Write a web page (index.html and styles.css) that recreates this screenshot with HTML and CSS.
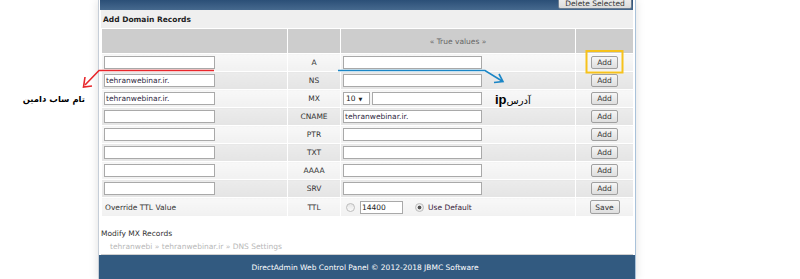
FILE: index.html
```html
<!DOCTYPE html>
<html>
  <head>
    <meta charset="UTF-8" />
    <link rel="stylesheet" href="styles.css">
  </head>
  <body>
    <div class="panel">
      <div class="topbar">
        <button class="btn-delete">Delete Selected</button>
      </div>
      <div class="content">
        <div class="section-title">Add Domain Records</div>
        <table class="records">
          <colgroup>
            <col style="width: 186px">
            <col style="width: 53px">
            <col style="width: 235px">
            <col style="width: 58px">
          </colgroup>
          <tr class="head">
            <td></td>
            <td></td>
            <td class="center">« True values »</td>
            <td></td>
          </tr>
          <tr class="odd">
            <td><input class="field" type="text"></td>
            <td class="center">A</td>
            <td><input class="field wide" type="text"></td>
            <td class="center"><button class="btn">Add</button></td>
          </tr>
          <tr class="even">
            <td><input class="field" type="text" value="tehranwebinar.ir."></td>
            <td class="center">NS</td>
            <td><input class="field wide" type="text"></td>
            <td class="center"><button class="btn">Add</button></td>
          </tr>
          <tr class="odd">
            <td><input class="field" type="text" value="tehranwebinar.ir."></td>
            <td class="center">MX</td>
            <td>
              <div class="mx-cell">
                <span class="fake-select">10 <span class="caret">▼</span></span>
                <input class="field mx" type="text">
              </div>
            </td>
            <td class="center"><button class="btn">Add</button></td>
          </tr>
          <tr class="even">
            <td><input class="field" type="text"></td>
            <td class="center">CNAME</td>
            <td><input class="field wide" type="text" value="tehranwebinar.ir."></td>
            <td class="center"><button class="btn">Add</button></td>
          </tr>
          <tr class="odd">
            <td><input class="field" type="text"></td>
            <td class="center">PTR</td>
            <td><input class="field wide" type="text"></td>
            <td class="center"><button class="btn">Add</button></td>
          </tr>
          <tr class="even">
            <td><input class="field" type="text"></td>
            <td class="center">TXT</td>
            <td><input class="field wide" type="text"></td>
            <td class="center"><button class="btn">Add</button></td>
          </tr>
          <tr class="odd">
            <td><input class="field" type="text"></td>
            <td class="center">AAAA</td>
            <td><input class="field wide" type="text"></td>
            <td class="center"><button class="btn">Add</button></td>
          </tr>
          <tr class="even">
            <td><input class="field" type="text"></td>
            <td class="center">SRV</td>
            <td><input class="field wide" type="text"></td>
            <td class="center"><button class="btn">Add</button></td>
          </tr>
          <tr class="odd ttl">
            <td class="label">Override TTL Value</td>
            <td class="center">TTL</td>
            <td>
              <div class="ttl-cell">
                <span class="radio"></span>
                <input class="field ttl-input" type="text" value="14400">
                <span class="radio checked"></span>
                <span class="use-default">Use Default</span>
              </div>
            </td>
            <td class="center"><button class="btn btn-save">Save</button></td>
          </tr>
        </table>
        <div class="links">
          <div class="modify">Modify MX Records</div>
          <div class="crumbs">tehranwebi » tehranwebinar.ir » DNS Settings</div>
        </div>
      </div>
      <div class="footer">DirectAdmin Web Control Panel © 2012-2018 JBMC Software</div>
    </div>

    <!-- annotations drawn over the screenshot -->
    <svg class="marks" width="800" height="279" viewBox="0 0 800 279">
      <path d="M214 70.5 H99 L85 85" fill="none" stroke="#e8262b" stroke-width="1.6"/>
      <path d="M85 77 L83.5 87 L92 86" fill="none" stroke="#e8262b" stroke-width="1.6"/>
      <path d="M338 70.5 H485 L502 81" fill="none" stroke="#1b86c6" stroke-width="1.6"/>
      <path d="M494 82.5 L503 81.5 L499 74" fill="none" stroke="#1b86c6" stroke-width="1.6"/>
      <rect x="586.5" y="51" width="36" height="21.5" fill="none" stroke="#f6c21c" stroke-width="2"/>
    </svg>
    <div class="note note-sub" dir="rtl">تام ساب دامین</div>
    <div class="note note-ip" dir="rtl"><span class="fa">آدرس</span><b>ip</b></div>
  </body>
</html>
```

FILE: styles.css
```css
* {
  margin: 0;
  padding: 0;
  box-sizing: border-box;
}
body {
  width: 800px;
  height: 279px;
  overflow: hidden;
  position: relative;
  background: #fff;
  font-family: "DejaVu Sans", Verdana, sans-serif;
  font-size: 7.5px;
  color: #333;
}
.panel {
  margin-left: 98px;
  width: 538px;
  background: #fff;
  border-left: 1px solid #c6ced8;
  border-right: 1px solid #a9c2da;
  box-shadow: 0 0 9px rgba(0, 0, 0, 0.13);
}
.topbar {
  height: 10px;
  margin: 0 2px 0 1px;
  background: linear-gradient(#2b4f77, #46698e);
  display: flex;
  justify-content: flex-end;
  align-items: flex-end;
  overflow: hidden;
  padding: 0 1px 1px 0;
}
.btn-delete {
  height: 15px;
  width: 74px;
  font-family: "DejaVu Sans", Verdana, sans-serif;
  font-size: 7.5px;
  color: #333;
  background: linear-gradient(#f4f4f4, #dcdcdc);
  border: 1px solid #6d7f93;
  border-radius: 2px;
  padding-top: 4px;
}
.content {
  padding: 0 2px;
}
.section-title {
  height: 18px;
  line-height: 19px;
  padding-left: 2px;
  background: #efefef;
  font-weight: bold;
  font-size: 7.5px;
  color: #222;
}
.records {
  width: 532px;
  border-collapse: collapse;
  table-layout: fixed;
}
.records td {
  border: 1px solid #fff;
  padding: 0 2px;
  vertical-align: middle;
  white-space: nowrap;
}
.records .center {
  text-align: center;
}
.head td {
  height: 25px;
  background: #cdcdcd;
  color: #666;
}
.odd td {
  height: 18px;
  background: linear-gradient(#f8f8f8, #f1f1f1);
}
.even td {
  height: 18px;
  background: linear-gradient(#ececec, #e4e4e4);
}
.ttl td {
  height: 19px;
}
.records .label {
  padding-left: 3px;
}
.field {
  display: block;
  height: 13px;
  width: 111px;
  border: 1px solid #a9a9a9;
  background: #fff;
  font-family: "DejaVu Sans", Verdana, sans-serif;
  font-size: 7.5px;
  color: #2e1f3e;
  padding: 0 1px;
}
.field.wide {
  width: 139px;
}
.mx-cell,
.ttl-cell {
  display: flex;
  align-items: center;
}
.fake-select {
  display: flex;
  align-items: center;
  height: 13px;
  width: 27px;
  border: 1px solid #a9a9a9;
  background: #fff;
  padding-left: 2px;
  gap: 3px;
  color: #222;
}
.caret {
  font-size: 5px;
}
.field.mx {
  width: 110px;
  margin-left: 2px;
}
.radio {
  width: 9px;
  height: 9px;
  border-radius: 50%;
  border: 1px solid #bdbdbd;
  background: linear-gradient(#e6e6e6, #fafafa);
  margin-left: 3px;
}
.radio.checked {
  margin-left: 12px;
  background: radial-gradient(circle, #555 0 1.6px, #ececec 2.2px);
}
.field.ttl-input {
  width: 43px;
  margin-left: 5px;
  height: 13px;
  color: #222;
}
.use-default {
  margin-left: 4px;
  color: #3a2340;
}
.btn {
  height: 13px;
  width: 27px;
  font-family: "DejaVu Sans", Verdana, sans-serif;
  font-size: 7.5px;
  color: #333;
  background: linear-gradient(#f6f6f6, #dedede);
  border: 1px solid #a0a0a0;
  border-radius: 2px;
}
.btn-save {
  width: 30px;
  height: 14px;
}
.links {
  height: 38px;
  padding-top: 11px;
  border-bottom: 1px solid #d0d0d0;
}
.modify {
  line-height: 12px;
  color: #333;
}
.crumbs {
  line-height: 13px;
  padding-left: 9px;
  color: #b8b8b8;
}
.footer {
  height: 25px;
  line-height: 25px;
  background: #325a80;
  color: #fff;
  text-align: center;
  font-size: 7.5px;
  padding-right: 4px;
}
.marks {
  position: absolute;
  left: 0;
  top: 0;
  pointer-events: none;
}
.note {
  position: absolute;
  color: #000;
  white-space: nowrap;
}
.note-sub {
  right: 715px;
  top: 94px;
  font-weight: bold;
  font-size: 8.5px;
}
.note-ip {
  left: 495px;
  top: 92px;
  display: flex;
  align-items: baseline;
}
.note-ip b {
  font-size: 13px;
  font-family: Arial, "Liberation Sans", sans-serif;
}
.note-ip .fa {
  font-size: 10px;
}
```
